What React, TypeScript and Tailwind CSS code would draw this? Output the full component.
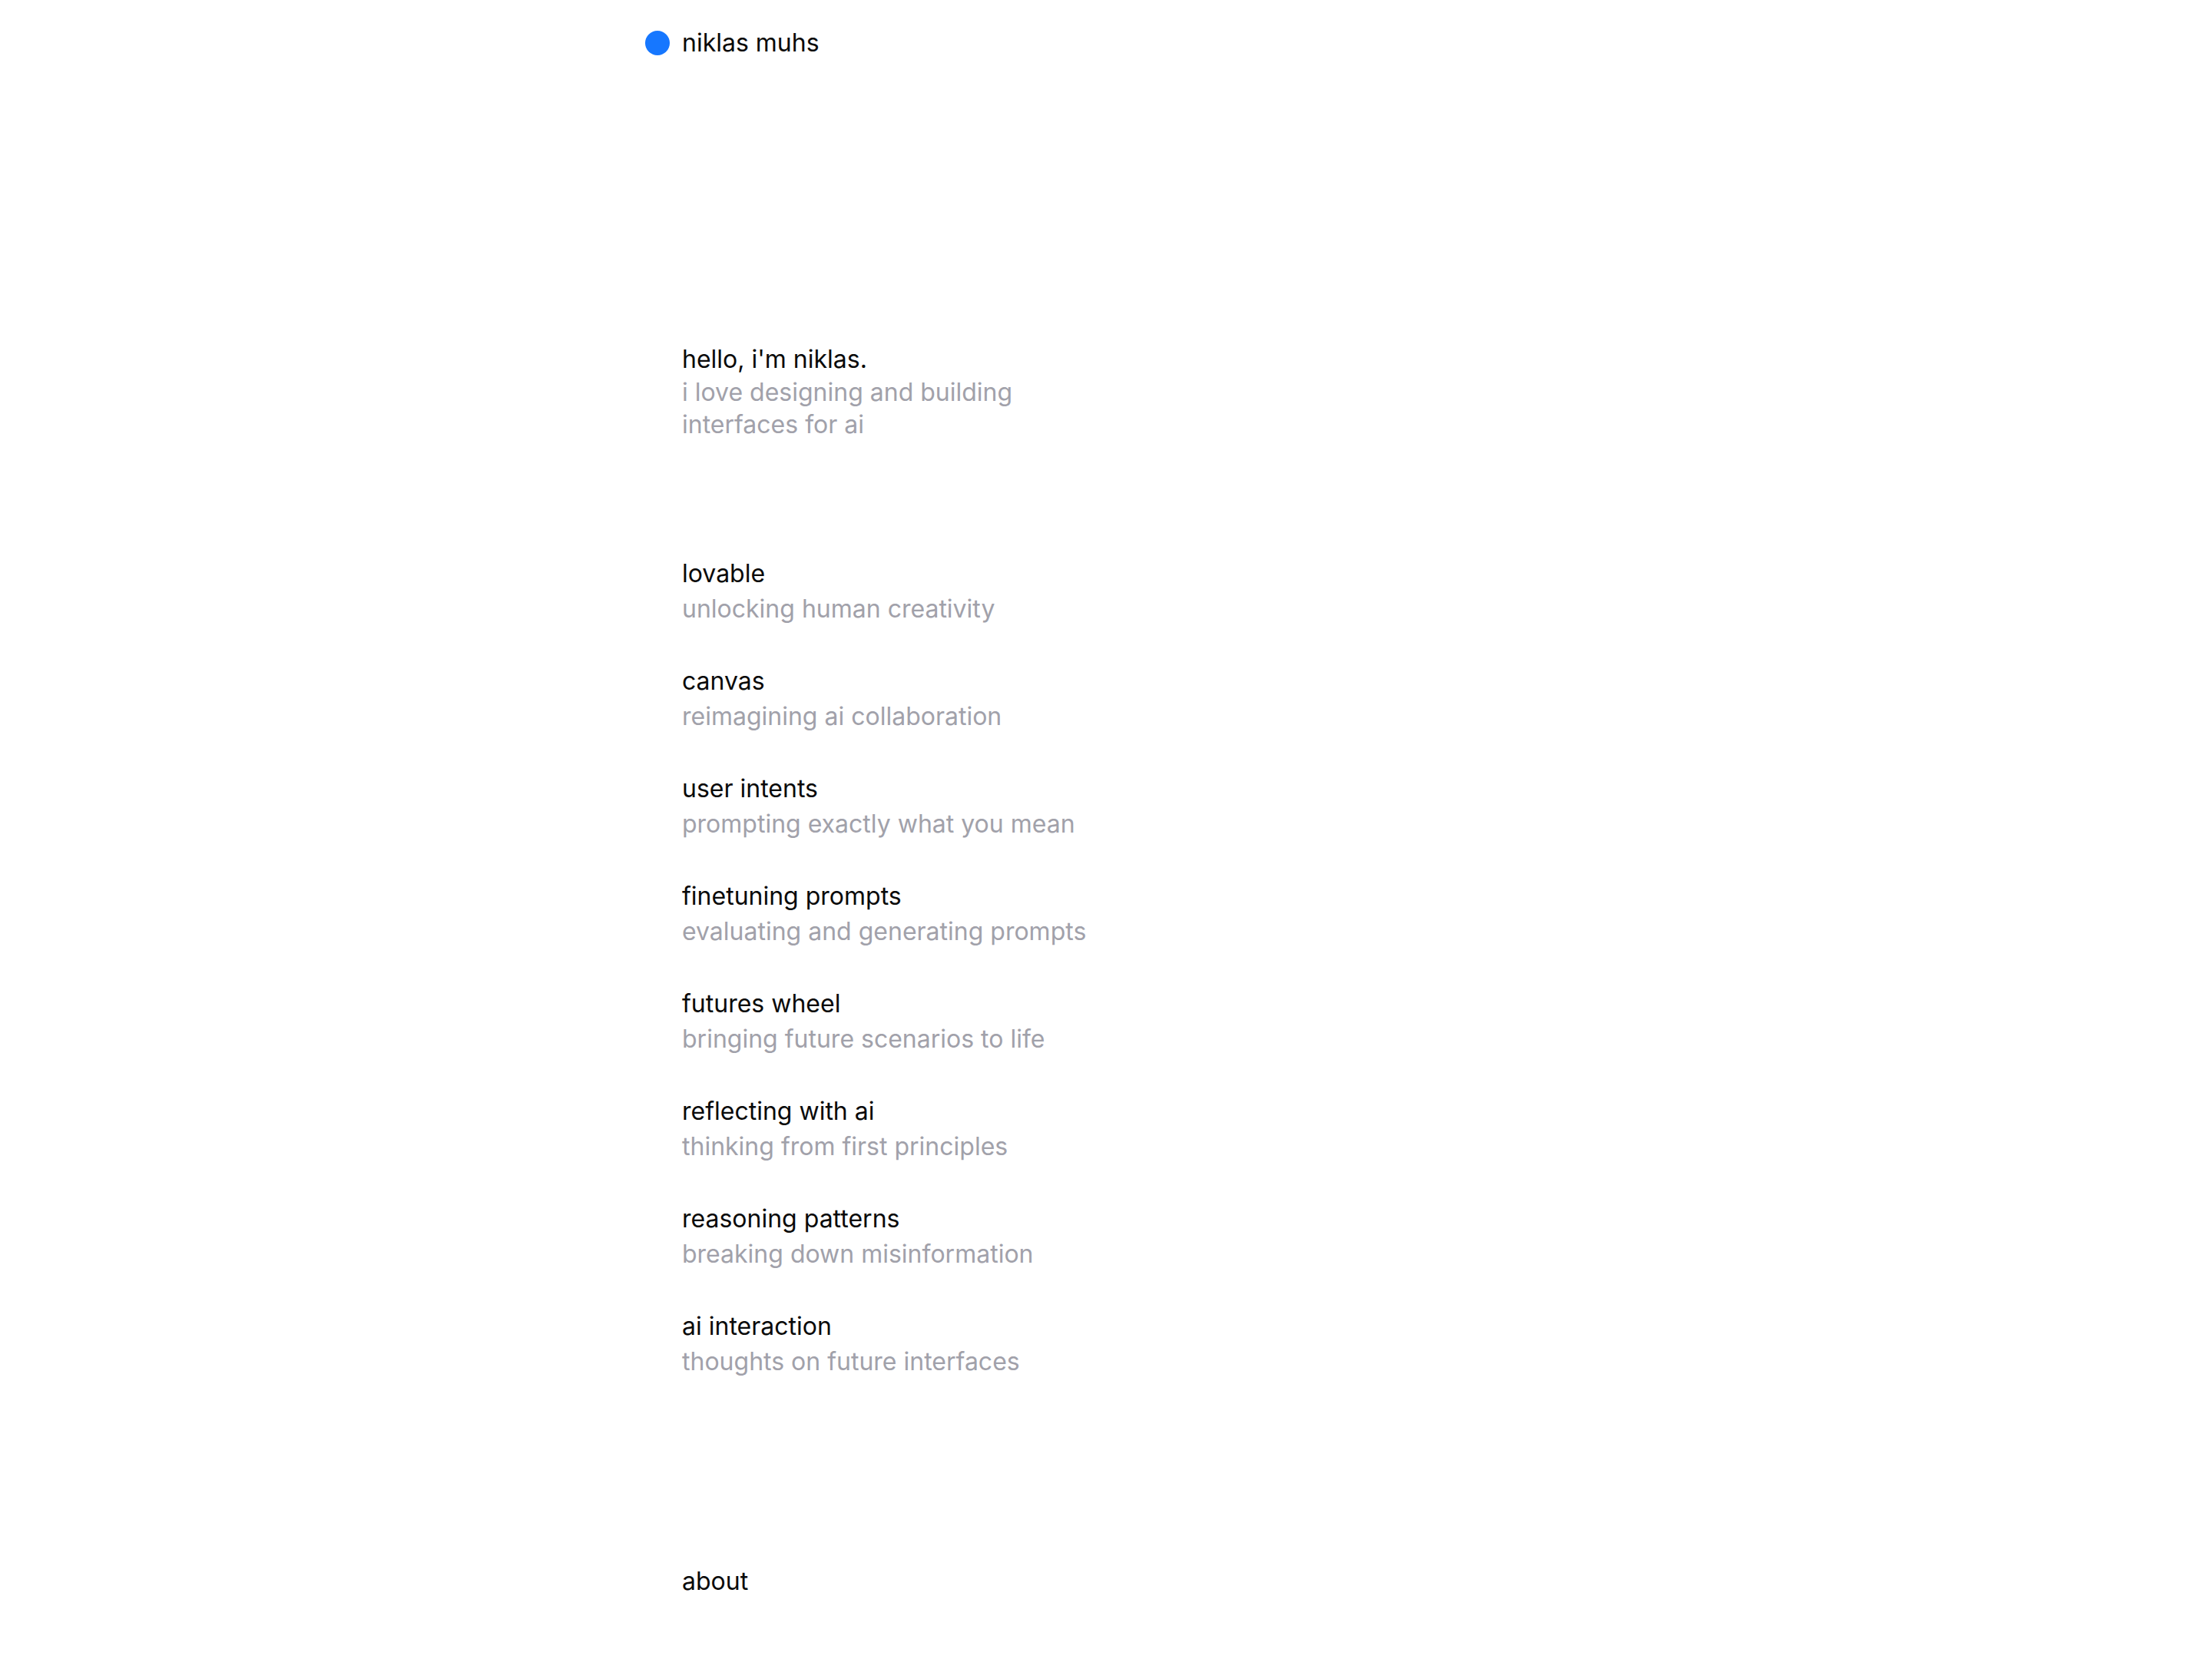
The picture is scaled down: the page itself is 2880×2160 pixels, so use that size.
const projects = [
  { title: "lovable", blurb: "unlocking human creativity" },
  { title: "canvas", blurb: "reimagining ai collaboration" },
  { title: "user intents", blurb: "prompting exactly what you mean" },
  { title: "finetuning prompts", blurb: "evaluating and generating prompts" },
  { title: "futures wheel", blurb: "bringing future scenarios to life" },
  { title: "reflecting with ai", blurb: "thinking from first principles" },
  { title: "reasoning patterns", blurb: "breaking down misinformation" },
  { title: "ai interaction", blurb: "thoughts on future interfaces" },
];

export default function App() {
  return (
    <div className="min-h-screen bg-white font-['Inter','Noto_Sans',sans-serif] text-[32px] text-[#0a0a0a] antialiased">
      <div className="mx-auto w-[1104px]">
        {/* Header */}
        <header className="pt-[32px]">
          <a href="#" className="-ml-[48px] flex items-center gap-[16px] leading-[48px]">
            <span className="h-[32px] w-[32px] rounded-full bg-[#1677ff]" />
            <span>niklas muhs</span>
          </a>
        </header>

        {/* Intro */}
        <section className="mt-[367px] max-w-[480px] leading-[42px]">
          <h1>hello, i'm niklas.</h1>
          <p className="pt-[1px] text-[#a1a1aa]">i love designing and building interfaces for ai</p>
        </section>

        {/* Projects */}
        <ul className="mt-[150px] flex flex-col gap-[48px] leading-[46px]">
          {projects.map((p) => (
            <li key={p.title}>
              <a href="#" className="block">
                <div>{p.title}</div>
                <div className="text-[#a1a1aa]">{p.blurb}</div>
              </a>
            </li>
          ))}
        </ul>

        {/* Footer */}
        <footer className="mt-[240px] pb-[48px] leading-[46px]">
          <a href="#">about</a>
        </footer>
      </div>
    </div>
  );
}
